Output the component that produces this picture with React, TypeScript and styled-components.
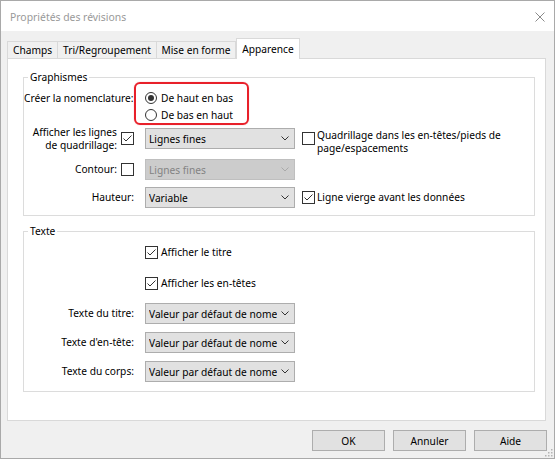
import React from "react";
import styled, { createGlobalStyle } from "styled-components";

const GlobalStyle = createGlobalStyle`
  html, body { margin: 0; padding: 0; background: #ffffff; }
  body {
    font-family: "Noto Sans", "Open Sans", sans-serif;
    font-size: 10.2px;
    color: #000;
  }
  * { box-sizing: border-box; }
`;

const Window = styled.div`
  position: relative;
  width: 555px;
  height: 459px;
  border: 1px solid #a9a9a9;
  background: #f0f0f0;
  display: flex;
  flex-direction: column;
`;

const TitleBar = styled.div`
  flex: 0 0 30px;
  background: #fff;
  display: flex;
  align-items: center;
  justify-content: space-between;
  padding: 1px 9px 0 9px;
  color: #999999;
  font-size: 10.4px;
`;

const Body = styled.div`
  flex: 1;
  display: flex;
  flex-direction: column;
  padding: 7px 7px 0 6px;
`;

const TabStrip = styled.div`
  display: flex;
  align-items: flex-end;
  height: 20px;
`;

const Tab = styled.div<{ $w: number; $active?: boolean }>`
  width: ${(p) => p.$w}px;
  height: ${(p) => (p.$active ? 21 : 17)}px;
  display: flex;
  align-items: center;
  justify-content: center;
  border: 1px solid #d9d9d9;
  border-bottom: none;
  border-left-width: ${(p) => (p.$active ? 1 : 0)}px;
  background: ${(p) => (p.$active ? "#ffffff" : "#f0f0f0")};
  position: ${(p) => (p.$active ? "relative" : "static")};
  z-index: ${(p) => (p.$active ? 1 : 0)};
  margin-bottom: ${(p) => (p.$active ? -1 : 0)}px;
  &:first-child { border-left-width: 1px; }
`;

const Panel = styled.div`
  height: 363px;
  margin-right: 1px;
  border: 1px solid #d9d9d9;
  background: #fff;
  padding: 13px 10px 0 15px;
`;

const Group = styled.fieldset<{ $gap?: number; $bottom: number }>`
  margin: ${(p) => p.$gap ?? 0}px 0 0 0;
  padding: 0 0 ${(p) => p.$bottom}px 0;
  border: 1px solid #dcdcdc;
  min-width: 0;
`;

const Legend = styled.legend`
  margin-left: 4px;
  padding: 0 2px;
  line-height: 10px;
`;

const NomRow = styled.div`
  display: flex;
  align-items: flex-start;
  height: 43px;
`;

const NomLabel = styled.div`
  flex: 0 0 110px;
  margin-top: 8px;
  line-height: 16px;
  white-space: nowrap;
`;

const Highlight = styled.div`
  width: 115px;
  height: 43px;
  border: 2px solid #e8202a;
  border-radius: 6px;
  box-shadow: 0 0 1px rgba(232, 32, 42, 0.5);
  padding: 6px 0 0 9px;
  display: flex;
  flex-direction: column;
  gap: 1px;
`;

const RadioOption = styled.div`
  height: 16px;
  display: flex;
  align-items: center;
  gap: 4px;
  white-space: nowrap;
`;

const RadioCircle = styled.span<{ $on?: boolean }>`
  width: 12px;
  height: 12px;
  border: 1px solid #333;
  border-radius: 50%;
  background: #fff;
  display: flex;
  align-items: center;
  justify-content: center;
  &::after {
    content: "";
    width: 6px;
    height: 6px;
    border-radius: 50%;
    background: ${(p) => (p.$on ? "#333" : "transparent")};
  }
`;

const Row = styled.div<{ $h: number; $top: number }>`
  display: flex;
  align-items: center;
  height: ${(p) => p.$h}px;
  margin-top: ${(p) => p.$top}px;
`;

const LabelCell = styled.div`
  flex: 0 0 111px;
  display: flex;
  align-items: center;
  justify-content: flex-end;
  gap: 4px;
  text-align: right;
  line-height: 13px;
  white-space: nowrap;
  padding-right: 1px;
`;

const Box = styled.span<{ $top?: number }>`
  flex: 0 0 13px;
  width: 13px;
  height: 13px;
  border: 1px solid #333;
  background: #fff;
  display: flex;
  align-items: center;
  justify-content: center;
  margin-top: ${(p) => p.$top ?? 0}px;
`;

const Combo = styled.div<{ $disabled?: boolean }>`
  flex: 0 0 150px;
  width: 150px;
  height: 21px;
  margin-left: 10px;
  display: flex;
  align-items: center;
  padding: 0 5px 0 3px;
  border: 1px solid ${(p) => (p.$disabled ? "#bfbfbf" : "#adadad")};
  background: ${(p) => (p.$disabled ? "#cccccc" : "#e1e1e1")};
  color: ${(p) => (p.$disabled ? "#838383" : "#000")};
`;

const ComboValue = styled.span`
  flex: 1;
  overflow: hidden;
  white-space: nowrap;
`;

const Chevron = styled.svg`
  flex: 0 0 8px;
  margin-left: 4px;
`;

const SideOption = styled.div<{ $start?: boolean }>`
  margin-left: 7px;
  align-self: ${(p) => (p.$start ? "flex-start" : "center")};
  margin-top: ${(p) => (p.$start ? 4 : 0)}px;
  display: flex;
  align-items: ${(p) => (p.$start ? "flex-start" : "center")};
  gap: 2px;
  line-height: 13px;
`;

const CheckRow = styled.div<{ $top: number }>`
  display: flex;
  align-items: center;
  gap: 3px;
  height: 16px;
  margin-top: ${(p) => p.$top}px;
  padding-left: 121px;
`;

const Footer = styled.div`
  display: flex;
  justify-content: flex-end;
  gap: 8px;
  margin-top: 9px;
`;

const Button = styled.div`
  width: 73px;
  height: 21px;
  border: 1px solid #adadad;
  background: #e1e1e1;
  display: flex;
  align-items: center;
  justify-content: center;
`;

const Grip = styled.svg`
  position: absolute;
  right: 1px;
  bottom: 1px;
`;

const Check = ({ on, top }: { on?: boolean; top?: number }) => (
  <Box $top={top}>
    {on && (
      <svg width="11" height="11" viewBox="0 0 11 11">
        <polyline points="1.5,5.5 4,8 9.5,2.5" fill="none" stroke="#333" strokeWidth="1" />
      </svg>
    )}
  </Box>
);

const Select = ({ value, disabled }: { value: string; disabled?: boolean }) => (
  <Combo $disabled={disabled}>
    <ComboValue>{value}</ComboValue>
    <Chevron width="8" height="5" viewBox="0 0 8 5">
      <polyline
        points="0.5,0.5 4,4 7.5,0.5"
        fill="none"
        stroke={disabled ? "#a9a9a9" : "#333"}
        strokeWidth="1"
      />
    </Chevron>
  </Combo>
);

const tabs = [
  { label: "Champs", w: 51 },
  { label: "Tri/Regroupement", w: 99 },
  { label: "Mise en forme", w: 79 },
  { label: "Apparence", w: 64, active: true },
];

const textRows = [
  { label: "Texte du titre:", top: 12 },
  { label: "Texte d'en-tête:", top: 8 },
  { label: "Texte du corps:", top: 8 },
];
const defaultText = "Valeur par défaut de nome";

export default function App() {
  return (
    <>
      <GlobalStyle />
      <Window>
        <TitleBar>
          <span>Propriétés des révisions</span>
          <svg width="10" height="10" viewBox="0 0 10 10">
            <path d="M0.5 0.5 L9.5 9.5 M9.5 0.5 L0.5 9.5" stroke="#8a8a8a" strokeWidth="1" />
          </svg>
        </TitleBar>
        <Body>
          <TabStrip>
            {tabs.map((t) => (
              <Tab key={t.label} $w={t.w} $active={t.active}>
                {t.label}
              </Tab>
            ))}
          </TabStrip>
          <Panel>
            <Group $bottom={7}>
              <Legend>Graphismes</Legend>
              <NomRow>
                <NomLabel>Créer la nomenclature:</NomLabel>
                <Highlight>
                  <RadioOption>
                    <RadioCircle $on />
                    De haut en bas
                  </RadioOption>
                  <RadioOption>
                    <RadioCircle />
                    De bas en haut
                  </RadioOption>
                </Highlight>
              </NomRow>
              <Row $h={27} $top={0}>
                <LabelCell>
                  <span>
                    Afficher les lignes
                    <br />
                    de quadrillage:
                  </span>
                  <Check on />
                </LabelCell>
                <Select value="Lignes fines" />
                <SideOption $start>
                  <Check top={3} />
                  <span>
                    Quadrillage dans les en-têtes/pieds de
                    <br />
                    page/espacements
                  </span>
                </SideOption>
              </Row>
              <Row $h={21} $top={7}>
                <LabelCell>
                  <span>Contour:</span>
                  <Check />
                </LabelCell>
                <Select value="Lignes fines" disabled />
              </Row>
              <Row $h={21} $top={7}>
                <LabelCell>
                  <span>Hauteur:</span>
                </LabelCell>
                <Select value="Variable" />
                <SideOption>
                  <Check on />
                  <span>Ligne vierge avant les données</span>
                </SideOption>
              </Row>
            </Group>
            <Group $gap={10} $bottom={9}>
              <Legend>Texte</Legend>
              <CheckRow $top={8}>
                <Check on />
                Afficher le titre
              </CheckRow>
              <CheckRow $top={15}>
                <Check on />
                Afficher les en-têtes
              </CheckRow>
              {textRows.map((r) => (
                <Row key={r.label} $h={21} $top={r.top}>
                  <LabelCell>
                    <span>{r.label}</span>
                  </LabelCell>
                  <Select value={defaultText} />
                </Row>
              ))}
            </Group>
          </Panel>
          <Footer>
            <Button>OK</Button>
            <Button>Annuler</Button>
            <Button>Aide</Button>
          </Footer>
        </Body>
        <Grip width="9" height="9" viewBox="0 0 9 9">
          {[
            [7, 1],
            [4, 4],
            [7, 4],
            [1, 7],
            [4, 7],
            [7, 7],
          ].map(([x, y]) => (
            <rect key={`${x}-${y}`} x={x} y={y} width="1.5" height="1.5" fill="#b4b4b4" />
          ))}
        </Grip>
      </Window>
    </>
  );
}
